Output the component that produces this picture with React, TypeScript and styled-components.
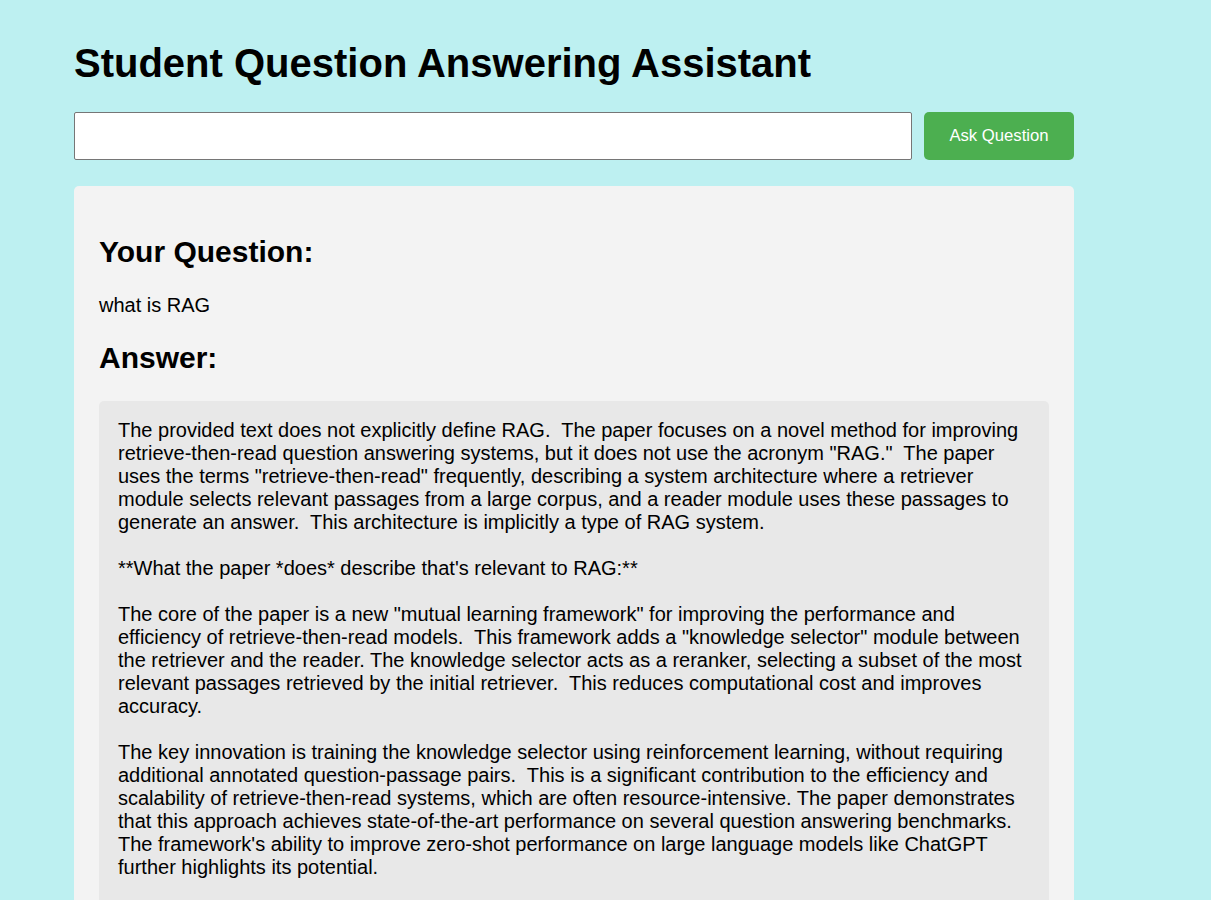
import React from "react";
import styled, { createGlobalStyle } from "styled-components";

const Global = createGlobalStyle`
  html, body { margin: 0; padding: 0; background: #bdf0f1; }
  body { font-family: "Liberation Sans", Arial, sans-serif; color: #000; }
`;

const Page = styled.div`
  padding: 0 0 40px 74px;
  width: 1000px;
`;

const Title = styled.h1`
  font-size: 40px;
  font-weight: bold;
  margin: 0;
  padding-top: 41px;
  line-height: 44px;
`;

const AskRow = styled.div`
  display: flex;
  gap: 12px;
  margin-top: 27px;
  height: 48px;
`;

const Input = styled.input`
  flex: 1;
  box-sizing: border-box;
  height: 48px;
  border: 1px solid #767676;
  border-radius: 2px;
  background: #fff;
  font-size: 16px;
  padding: 0 10px;
`;

const AskButton = styled.button`
  width: 150px;
  height: 48px;
  border: none;
  border-radius: 5px;
  background: #4caf50;
  color: #fff;
  font-family: "Liberation Sans", Arial, sans-serif;
  font-size: 16.7px;
`;

const Panel = styled.div`
  margin-top: 26px;
  background: #f3f3f3;
  border-radius: 5px;
  padding: 25px 25px 20px;
`;

const Heading = styled.h2<{ $gap: number }>`
  font-size: 30px;
  font-weight: bold;
  margin: ${(p) => p.$gap}px 0 0;
  line-height: 34px;
`;

const Question = styled.p`
  font-size: 20px;
  line-height: 23px;
  margin: 25px 0 0;
`;

const AnswerBox = styled.div`
  margin-top: 26px;
  background: #e8e8e8;
  border-radius: 5px;
  padding: 18px 19px;
  font-size: 20px;
  line-height: 23px;
  white-space: pre-wrap;
`;

const answer = `The provided text does not explicitly define RAG.  The paper focuses on a novel method for improving retrieve-then-read question answering systems, but it does not use the acronym "RAG."  The paper uses the terms "retrieve-then-read" frequently, describing a system architecture where a retriever module selects relevant passages from a large corpus, and a reader module uses these passages to generate an answer.  This architecture is implicitly a type of RAG system.

**What the paper *does* describe that's relevant to RAG:**

The core of the paper is a new "mutual learning framework" for improving the performance and efficiency of retrieve-then-read models.  This framework adds a "knowledge selector" module between the retriever and the reader. The knowledge selector acts as a reranker, selecting a subset of the most relevant passages retrieved by the initial retriever.  This reduces computational cost and improves accuracy.

The key innovation is training the knowledge selector using reinforcement learning, without requiring additional annotated question-passage pairs.  This is a significant contribution to the efficiency and scalability of retrieve-then-read systems, which are often resource-intensive. The paper demonstrates that this approach achieves state-of-the-art performance on several question answering benchmarks.  The framework's ability to improve zero-shot performance on large language models like ChatGPT further highlights its potential.

In summary, while the paper doesn't use the term RAG, it describes a sophisticated and improved version of a retrieval-augmented generation system.`;

export default function App() {
  return (
    <>
      <Global />
      <Page>
        <Title>Student Question Answering Assistant</Title>
        <AskRow>
          <Input type="text" />
          <AskButton>Ask Question</AskButton>
        </AskRow>
        <Panel>
          <Heading $gap={24}>Your Question:</Heading>
          <Question>what is RAG</Question>
          <Heading $gap={24}>Answer:</Heading>
          <AnswerBox>{answer}</AnswerBox>
        </Panel>
      </Page>
    </>
  );
}
